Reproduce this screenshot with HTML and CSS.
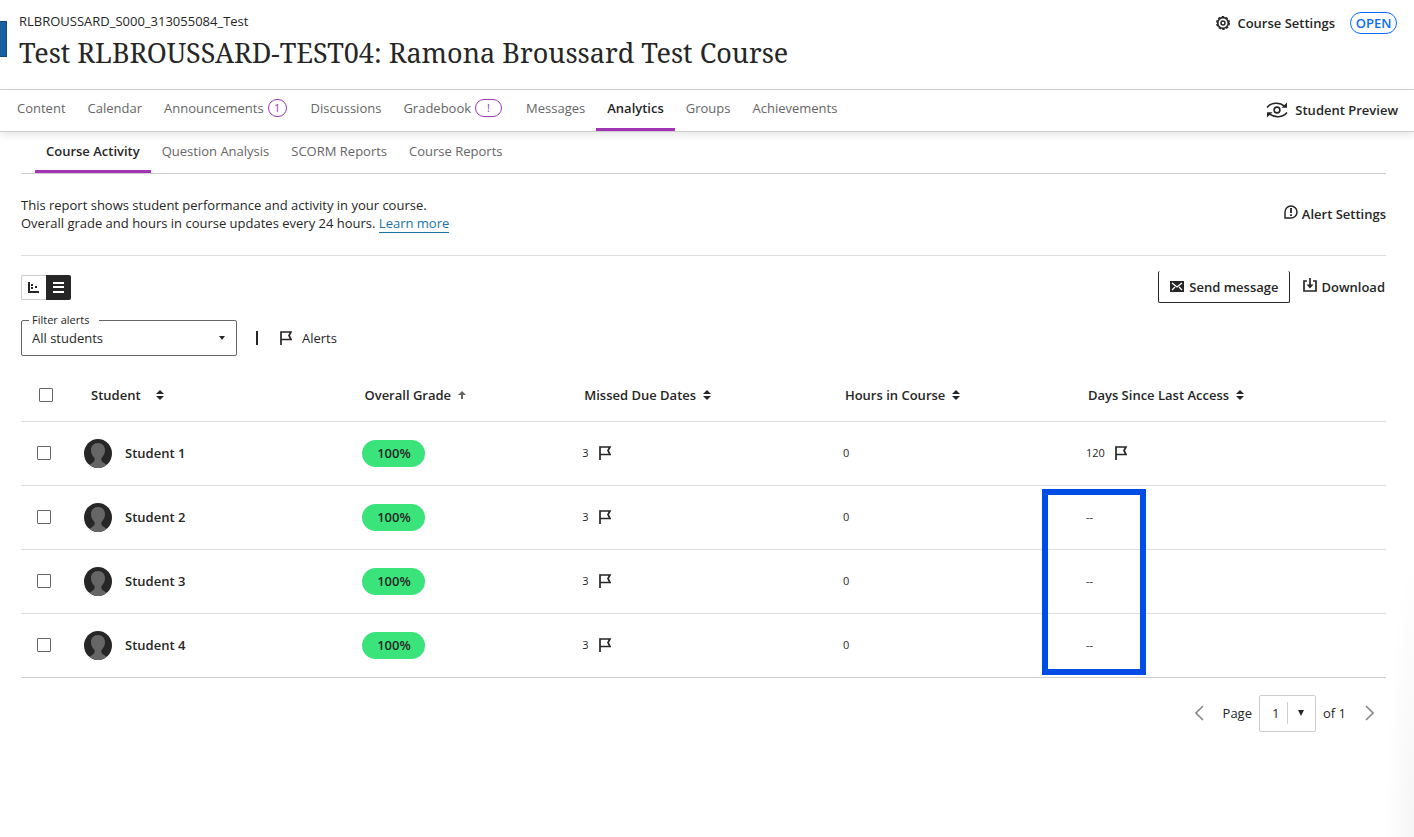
FILE: index.html
```html
<!DOCTYPE html>
<html lang="en">
<head>
    <meta charset="UTF-8">
    <meta name="viewport" content="width=device-width, initial-scale=1.0">
    <title>Course Activity</title>
    <link rel="stylesheet" href="styles.css">
</head>
<body>
    <!-- shared icons -->
    <svg class="sprite" width="0" height="0" aria-hidden="true">
        <symbol id="flag" viewBox="0 0 12 14">
            <path d="M1 14V1H11L9 4.500L11 8.500H1" fill="none" stroke="#262626" stroke-width="1.700"/>
        </symbol>
        <symbol id="sort" viewBox="0 0 8 10">
            <path d="M4 0L8 4H0ZM0 6H8L4 10Z" fill="#262626"/>
        </symbol>
        <symbol id="avatar" viewBox="0 0 28 29">
            <ellipse cx="14" cy="14.500" rx="14" ry="14.500" fill="#262626"/>
            <path d="M14 4C9.500 4 7 7 7 11C7 14.500 8.500 17 10.300 18.800C11.300 21 10.500 22.500 8.500 23.700L5.500 25.700C8 28 11 29 14 29S20 28 22.500 25.700L19.500 23.700C17.500 22.500 16.700 21 17.700 18.800C19.500 17 21 14.500 21 11C21 7 18.500 4 14 4Z" fill="#666"/>
        </symbol>
    </svg>

    <div class="page">
        <header class="header">
            <div class="panel-edge"></div>
            <div class="course">
                <p class="course-id">RLBROUSSARD_S000_313055084_Test</p>
                <h1>Test RLBROUSSARD-TEST04: Ramona Broussard Test Course</h1>
            </div>
            <div class="course-actions">
                <button class="icon-button" type="button">
                    <svg width="14" height="14" viewBox="0 0 14 14" fill="none" stroke="#262626">
                        <circle cx="7" cy="7" r="5.300" stroke-width="1.700"/>
                        <circle cx="7" cy="7" r="6.300" stroke-width="1.400" stroke-dasharray="2.400 1.560"/>
                        <circle cx="7" cy="7" r="2" stroke-width="1.500"/>
                    </svg>
                    Course Settings
                </button>
                <button class="open-pill" type="button">OPEN</button>
            </div>
        </header>

        <div class="main-nav">
            <nav class="tabs">
                <a href="#">Content</a>
                <a href="#">Calendar</a>
                <a href="#" class="with-badge">Announcements <span class="badge">1</span></a>
                <a href="#">Discussions</a>
                <a href="#" class="with-badge">Gradebook <span class="badge wide">!</span></a>
                <a href="#">Messages</a>
                <a href="#" class="active">Analytics</a>
                <a href="#">Groups</a>
                <a href="#">Achievements</a>
            </nav>
            <button class="icon-button preview" type="button">
                <svg width="22" height="16" viewBox="0 0 22 16" fill="none" stroke="#262626" stroke-width="1.600">
                    <circle cx="11" cy="8" r="2.900"/>
                    <path d="M1 5.500C5 0.500 13 -0.500 19 4.500M21 10.500C17 15.500 9 16.500 3 11.500"/>
                    <path d="M21 0.500V5.700H15.500ZM1 15.500V10.300H6.500Z" fill="#262626" stroke="none"/>
                </svg>
                Student Preview
            </button>
        </div>

        <main class="content">
            <nav class="tabs sub-tabs">
                <a href="#" class="active">Course Activity</a>
                <a href="#">Question Analysis</a>
                <a href="#">SCORM Reports</a>
                <a href="#">Course Reports</a>
            </nav>

            <section class="intro">
                <p>This report shows student performance and activity in your course.<br>
                Overall grade and hours in course updates every 24 hours. <a href="#">Learn more</a></p>
                <button class="icon-button raised-icon" type="button">
                    <svg width="14" height="14" viewBox="0 0 14 14" fill="none" stroke="#262626" stroke-width="1.500">
                        <path d="M1 13V7A6 6 0 1 1 7 13Z"/>
                        <path d="M7 3V8M7 9.300V11" stroke-width="1.800"/>
                    </svg>
                    Alert Settings
                </button>
            </section>

            <div class="toolbar">
                <div class="view-toggle">
                    <button type="button" aria-label="Chart view">
                        <svg width="12" height="12" viewBox="0 0 12 12" fill="#262626">
                            <path d="M0 1H2V10H11V12H0ZM3 3H5V5H3ZM3 6H5V8H3ZM7 5H9V7H7Z"/>
                        </svg>
                    </button>
                    <button type="button" class="selected" aria-label="List view">
                        <svg width="12" height="12" viewBox="0 0 12 12" fill="#fff">
                            <path d="M0 1H11V3H0ZM0 5H11V7H0ZM0 10H11V12H0Z"/>
                        </svg>
                    </button>
                </div>
                <div class="toolbar-actions">
                    <button class="icon-button send" type="button">
                        <svg width="14" height="11" viewBox="0 0 14 11">
                            <path d="M0 0H14V11H0Z" fill="#262626"/>
                            <path d="M2 2L7 6L12 2M2 9L5 6M12 9L9 6" fill="none" stroke="#fff" stroke-width="1.300"/>
                        </svg>
                        Send message
                    </button>
                    <button class="icon-button raised-icon" type="button">
                        <svg width="14" height="14" viewBox="0 0 14 14" fill="none" stroke="#262626" stroke-width="1.700">
                            <path d="M4 3H1V13H13V3H10M7 0V9"/>
                            <path d="M3.500 6.500H10.500L7 10.500Z" fill="#262626" stroke="none"/>
                        </svg>
                        Download
                    </button>
                </div>
            </div>

            <div class="filters">
                <div class="filter-select">
                    <label for="filterAlerts">Filter alerts</label>
                    <select id="filterAlerts">
                        <option>All students</option>
                    </select>
                    <svg class="caret" width="6" height="4" viewBox="0 0 6 4"><path d="M0 0H6L3 4Z" fill="#262626"/></svg>
                </div>
                <span class="bar"></span>
                <svg width="12" height="14"><use href="#flag"/></svg>
                <span>Alerts</span>
            </div>

            <table class="students">
                <colgroup>
                    <col class="col-check">
                    <col class="col-student">
                    <col class="col-grade">
                    <col class="col-missed">
                    <col class="col-hours">
                    <col>
                </colgroup>
                <thead>
                    <tr>
                        <th><input type="checkbox" aria-label="Select all students"></th>
                        <th><button class="sort wide-gap" type="button">Student <svg width="8" height="10"><use href="#sort"/></svg></button></th>
                        <th><button class="sort" type="button">Overall Grade <svg width="8" height="8" viewBox="0 0 8 8"><path d="M4 0L8 4H5V8H3V4H0Z" fill="#666"/></svg></button></th>
                        <th><button class="sort" type="button">Missed Due Dates <svg width="8" height="10"><use href="#sort"/></svg></button></th>
                        <th><button class="sort" type="button">Hours in Course <svg width="8" height="10"><use href="#sort"/></svg></button></th>
                        <th><button class="sort" type="button">Days Since Last Access <svg width="8" height="10"><use href="#sort"/></svg></button></th>
                    </tr>
                </thead>
                <tbody>
                    <tr>
                        <td><input type="checkbox" aria-label="Select Student 1"></td>
                        <td><div class="student"><svg width="28" height="29"><use href="#avatar"/></svg>Student 1</div></td>
                        <td><span class="grade">100%</span></td>
                        <td><div class="value">3 <svg width="12" height="14"><use href="#flag"/></svg></div></td>
                        <td>0</td>
                        <td><div class="value">120 <svg width="12" height="14"><use href="#flag"/></svg></div></td>
                    </tr>
                    <tr>
                        <td><input type="checkbox" aria-label="Select Student 2"></td>
                        <td><div class="student"><svg width="28" height="29"><use href="#avatar"/></svg>Student 2</div></td>
                        <td><span class="grade">100%</span></td>
                        <td><div class="value">3 <svg width="12" height="14"><use href="#flag"/></svg></div></td>
                        <td>0</td>
                        <td class="marked">--<span class="highlight"></span></td>
                    </tr>
                    <tr>
                        <td><input type="checkbox" aria-label="Select Student 3"></td>
                        <td><div class="student"><svg width="28" height="29"><use href="#avatar"/></svg>Student 3</div></td>
                        <td><span class="grade">100%</span></td>
                        <td><div class="value">3 <svg width="12" height="14"><use href="#flag"/></svg></div></td>
                        <td>0</td>
                        <td>--</td>
                    </tr>
                    <tr>
                        <td><input type="checkbox" aria-label="Select Student 4"></td>
                        <td><div class="student"><svg width="28" height="29"><use href="#avatar"/></svg>Student 4</div></td>
                        <td><span class="grade">100%</span></td>
                        <td><div class="value">3 <svg width="12" height="14"><use href="#flag"/></svg></div></td>
                        <td>0</td>
                        <td>--</td>
                    </tr>
                </tbody>
            </table>

            <div class="pagination">
                <button type="button" aria-label="Previous page">
                    <svg width="9" height="16" viewBox="0 0 9 16" fill="none" stroke="#888" stroke-width="1.600"><path d="M8 1L1 8L8 15"/></svg>
                </button>
                <label for="pageNumber">Page</label>
                <div class="page-select">
                    <select id="pageNumber">
                        <option>1</option>
                    </select>
                    <svg class="caret" width="6" height="6" viewBox="0 0 6 6"><path d="M0 0H6L3 6Z" fill="#262626"/></svg>
                </div>
                <span>of 1</span>
                <button type="button" class="next" aria-label="Next page">
                    <svg width="9" height="16" viewBox="0 0 9 16" fill="none" stroke="#888" stroke-width="1.600"><path d="M1 1L8 8L1 15"/></svg>
                </button>
            </div>
        </main>
    </div>
</body>
</html>
```
FILE: styles.css
```css
* {
    margin: 0;
    padding: 0;
    box-sizing: border-box;
}

body {
    background-color: #fff;
    color: #262626;
    font-family: 'Open Sans', 'Noto Sans', sans-serif;
    font-size: 13px;
    line-height: 18px;
}

button,
select {
    font: inherit;
    color: inherit;
    background: none;
    border: none;
    cursor: pointer;
}

svg {
    display: block;
    flex-shrink: 0;
}

.sprite {
    position: absolute;
}

.page {
    position: relative;
    min-height: 100vh;
}

/* faint shade in the lower right corner */
.page::after {
    content: "";
    position: absolute;
    right: 0;
    bottom: 0;
    width: 28px;
    height: 280px;
    background: radial-gradient(28px 280px at bottom right, rgba(0, 0, 0, 0.04), transparent);
    pointer-events: none;
}

/* Header */
.header {
    position: relative;
    display: flex;
    justify-content: space-between;
    align-items: flex-start;
    height: 90px;
    padding: 12px 17px 0 19px;
    border-bottom: 1px solid #cdcdcd;
}

.panel-edge {
    position: absolute;
    left: 0;
    top: 21px;
    width: 7px;
    height: 36px;
    background-color: #1660a0;
    border: 1px solid #0f4a80;
    border-left: none;
}

h1 {
    font-family: 'Noto Serif', 'DejaVu Serif', serif;
    font-size: 27px;
    font-weight: 400;
    line-height: 46px;
}

.icon-button {
    display: flex;
    align-items: center;
    gap: 7px;
    font-weight: 550;
    white-space: nowrap;
}

.course-actions {
    display: flex;
    align-items: center;
    gap: 15px;
}

.open-pill {
    width: 47px;
    height: 22px;
    border: 1px solid #0a6cff;
    border-radius: 11px;
    color: #0a6cff;
    font-weight: 600;
    line-height: 18px;
}

/* Tabs */
.main-nav {
    display: flex;
    justify-content: space-between;
    height: 42px;
    padding: 0 16px 0 6px;
    border-bottom: 1px solid #cdcdcd;
    box-shadow: 0 3px 8px rgba(0, 0, 0, 0.1);
}

.tabs {
    display: flex;
}

.tabs a {
    display: flex;
    align-items: center;
    padding: 0 11px 2px;
    border-bottom: 3px solid transparent;
    color: #666;
    font-weight: 500;
    text-decoration: none;
}

.tabs a.active {
    color: #262626;
    font-weight: 550;
    border-bottom-color: #a234b5;
}

.tabs .with-badge {
    gap: 4px;
    padding-right: 13px;
}

.badge {
    width: 19px;
    height: 18px;
    border: 1px solid #a234b5;
    border-radius: 9px;
    color: #a234b5;
    font-size: 11px;
    line-height: 16px;
    text-align: center;
}

.badge.wide {
    width: 27px;
}

.preview {
    padding-bottom: 1px;
}

/* Report */
.content {
    padding: 0 28px 0 21px;
}

.sub-tabs {
    height: 42px;
    padding-left: 14px;
    border-bottom: 1px solid #cdcdcd;
}

.sub-tabs a {
    padding-bottom: 1px;
}

.intro {
    display: flex;
    justify-content: space-between;
    align-items: center;
    height: 82px;
    padding-bottom: 2px;
    border-bottom: 1px solid #dedede;
}

.intro a {
    color: #1874a4;
    text-decoration: none;
    border-bottom: 1px solid #1874a4;
}

.raised-icon {
    gap: 4px;
}

.raised-icon svg {
    margin-bottom: 4px;
}

.toolbar {
    display: flex;
    justify-content: space-between;
    align-items: center;
    padding-top: 15px;
}

.view-toggle {
    display: flex;
}

.view-toggle button {
    display: flex;
    align-items: center;
    justify-content: center;
    width: 25px;
    height: 25px;
    border: 1px solid #cdcdcd;
    border-right: none;
    border-radius: 2px 0 0 2px;
}

.view-toggle .selected {
    background-color: #262626;
    border: none;
    border-radius: 0 2px 2px 0;
}

.toolbar-actions {
    display: flex;
    gap: 13px;
    padding-right: 1px;
}

.send {
    height: 32px;
    padding: 0 11px;
    gap: 5px;
    border: 1px solid #262626;
    border-top: none;
    border-radius: 2px;
}

.filters {
    display: flex;
    align-items: center;
    margin: 17px 0 15px;
}

.filter-select {
    position: relative;
    width: 216px;
}

.filter-select label {
    position: absolute;
    left: 8px;
    top: -9px;
    width: 70px;
    padding-left: 3px;
    background-color: #fff;
    font-size: 11px;
}

.filter-select select {
    display: block;
    width: 100%;
    height: 36px;
    padding: 0 10px;
    border: 1px solid #666;
    border-radius: 2px;
    appearance: none;
}

.caret {
    position: absolute;
    top: 16px;
    right: 12px;
    pointer-events: none;
}

.bar {
    width: 2px;
    height: 14px;
    margin: 0 22px 0 19px;
    background-color: #262626;
}

.filters span:last-child {
    margin-left: 10px;
}

/* Table */
.students {
    width: 100%;
    table-layout: fixed;
    border-collapse: collapse;
}

.col-check {
    width: 63px;
}

.col-student {
    width: 20.4%;
}

.col-grade {
    width: 16.1%;
}

.col-missed {
    width: 19.1%;
}

.col-hours {
    width: 17.8%;
}

th {
    height: 50px;
    padding: 0 0 1px 2px;
    border-bottom: 1px solid #dedede;
    text-align: left;
}

td {
    height: 64px;
    border-bottom: 1px solid #dedede;
    font-size: 11px;
}

tbody tr:last-child td {
    border-bottom-color: #cdcdcd;
}

input[type="checkbox"] {
    display: block;
    width: 14px;
    height: 14px;
    margin-left: 16px;
    border: 1px solid #666;
    border-radius: 1px;
    background-color: #fff;
    appearance: none;
}

input[type="checkbox"]:checked {
    background-color: #262626;
}

.sort {
    display: flex;
    align-items: center;
    gap: 7px;
    font-weight: 550;
    white-space: nowrap;
}

.sort.wide-gap {
    gap: 15px;
    padding-left: 5px;
}

.student {
    display: flex;
    align-items: center;
    gap: 13px;
    font-size: 13px;
    font-weight: 550;
}

.grade {
    display: block;
    width: 63px;
    border-radius: 14px;
    background-color: #3ae47a;
    font-size: 13px;
    font-weight: 600;
    line-height: 27px;
    text-align: center;
}

.value {
    display: flex;
    align-items: center;
    gap: 10px;
}

.marked {
    position: relative;
}

.highlight {
    position: absolute;
    left: -44px;
    top: 3px;
    width: 104px;
    height: 186px;
    border: 6px solid #004de6;
    pointer-events: none;
}

/* Pagination */
.pagination {
    display: flex;
    justify-content: flex-end;
    align-items: center;
    gap: 7px;
    padding: 17px 12px 0 0;
}

.pagination label,
.pagination .next {
    margin-left: 12px;
}

.page-select {
    position: relative;
    width: 57px;
}

.page-select select {
    display: block;
    width: 100%;
    height: 37px;
    padding-left: 12px;
    border: 1px solid #cdcdcd;
    border-radius: 2px;
    appearance: none;
}

.page-select::after {
    content: "";
    position: absolute;
    left: 28px;
    top: 7px;
    width: 1px;
    height: 22px;
    background-color: #cdcdcd;
}

.page-select .caret {
    top: 15px;
}
```
